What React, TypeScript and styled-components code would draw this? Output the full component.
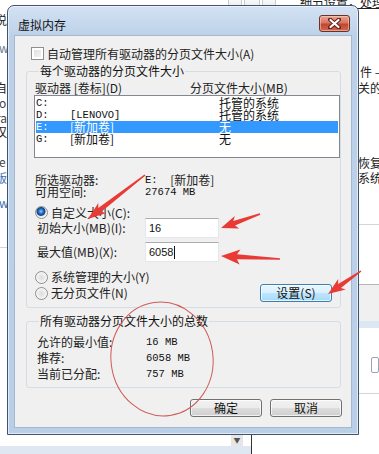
import React from 'react';
import styled, { createGlobalStyle } from 'styled-components';

const GlobalStyle = createGlobalStyle`
  html, body { margin: 0; padding: 0; background: #fff; }
  body { font-family: "Noto Sans CJK SC", "Liberation Sans", sans-serif; }
`;

const CJK = `"Noto Sans CJK SC", "Liberation Sans", sans-serif`;
const MONO = `"Liberation Mono", "Noto Sans CJK SC", monospace`;

/* ---------- page behind the dialog ---------- */

const Page = styled.div`
  position: relative;
  width: 379px;
  height: 454px;
  overflow: hidden;
  background: #fff;
  font-family: ${CJK};
  font-size: 12px;
  color: #222;
`;

const TopStrip = styled.div`
  display: flex;
  align-items: flex-start;
  height: 12px;
`;

const ToolIcons = styled.div`
  display: flex;
  gap: 2px;
  margin-left: 228px;
  margin-top: -2px;
`;

const ToolIcon = styled.div<{ $w: number }>`
  width: ${(p) => p.$w}px;
  height: 12px;
  border: 1px solid #c8ccd2;
  background: linear-gradient(#fafafa, #e4e6ea);
`;

const TopText = styled.div`
  margin-left: 24px;
  margin-top: -4px;
  line-height: 12px;
  white-space: nowrap;
  text-decoration: underline;
`;

const Body = styled.div`
  display: flex;
  height: 423px;
`;

const SideStrip = styled.div<{ $w: number }>`
  width: ${(p) => p.$w}px;
  display: flex;
  flex-direction: column;
  overflow: hidden;
`;

const Center = styled.div`
  flex: 1;
`;

const SideLine = styled.div<{ $gap: number; $color?: string; $shift?: number }>`
  margin-top: ${(p) => p.$gap}px;
  margin-left: ${(p) => p.$shift ?? 0}px;
  line-height: 12px;
  height: 12px;
  white-space: nowrap;
  color: ${(p) => p.$color ?? '#222'};
`;

const Rule = styled.div<{ $gap: number; $color?: string }>`
  margin-top: ${(p) => p.$gap}px;
  height: 1px;
  background: ${(p) => p.$color ?? '#d4d4d4'};
`;

const GreyBand = styled.div`
  height: 36px;
  background: #f0f0f0;
  border-top: 1px solid #b5b5b5;
  border-bottom: 7px solid #dce7f3;
`;

const SmallBox = styled.div`
  margin-top: 29px;
  margin-left: 14px;
  width: 6px;
  height: 14px;
  border: 1px solid #9aa4b0;
  border-radius: 2px;
`;

const BottomBar = styled.div`
  display: flex;
  height: 19px;
`;

const BottomLeft = styled.div`
  width: 251px;
  border-right: 1px solid #333;
  display: flex;
  flex-direction: column;
`;

const BottomWhite = styled.div`
  height: 11px;
  display: flex;
  justify-content: flex-end;
  padding-right: 8px;
`;

const ScrollArrow = styled.div`
  width: 12px;
  height: 11px;
  background: #e6e6e6;
  display: flex;
  justify-content: center;
  align-items: center;
  color: #555;
  font-size: 7px;
  line-height: 7px;
`;

const BottomBlue = styled.div`
  flex: 1;
  background: #dfe8f2;
`;

/* ---------- dialog ---------- */

const Window = styled.div`
  position: absolute;
  left: 7px;
  top: 5px;
  width: 350px;
  height: 428px;
  border: 1px solid #40546e;
  border-radius: 7px 7px 0 0;
  background: linear-gradient(#d3e2f3 0, #bcd1e9 30px, #b9cfe8 100%);
  display: flex;
  flex-direction: column;
  box-shadow: inset 0 0 0 1px rgba(255, 255, 255, 0.6);
`;

const TitleBar = styled.div`
  height: 29px;
  display: flex;
  align-items: flex-start;
  justify-content: space-between;
  padding: 9px 8px 0 10px;
  box-sizing: border-box;
`;

const TitleText = styled.div`
  margin-top: 4px;
  font-size: 12px;
  line-height: 12px;
  color: #111;
`;

const CloseButton = styled.div`
  width: 31px;
  height: 17px;
  box-sizing: border-box;
  border: 1px solid #6e2f27;
  border-radius: 3px;
  background: linear-gradient(#e8a594 0%, #d7765f 45%, #c24630 55%, #d0674c 100%);
  display: flex;
  align-items: center;
  justify-content: center;
  box-shadow: inset 0 0 0 1px rgba(255, 220, 210, 0.5);
`;

const Client = styled.div`
  margin: 0 6px;
  height: 393px;
  box-sizing: border-box;
  background: #f0f0f0;
  border: 1px solid #a7b8cd;
  display: flex;
  flex-direction: column;
`;

const CheckRow = styled.label`
  display: flex;
  align-items: center;
  gap: 3px;
  margin: 11px 0 0 16px;
  height: 13px;
  line-height: 12px;
`;

const CheckBox = styled.span`
  width: 13px;
  height: 13px;
  box-sizing: border-box;
  border: 1px solid #8f8f8f;
  background: linear-gradient(135deg, #dcdcdc, #f6f6f6);
  box-shadow: inset 0 0 0 2px #fff;
`;

const Group = styled.fieldset<{ $gap: number; $padBottom: number }>`
  margin: ${(p) => p.$gap}px 0 0 11px;
  width: 315px;
  box-sizing: border-box;
  padding: 0 8px ${(p) => p.$padBottom}px 7px;
  border: 1px solid #d5dde4;
  border-radius: 3px;
  min-width: 0;
`;

const Legend = styled.legend`
  margin-left: 5px;
  padding: 0 1px;
  font-size: 12px;
  line-height: 12px;
  color: #111;
`;

const HeaderRow = styled.div`
  display: flex;
  margin: 5px 0 1px 1px;
  line-height: 12px;
  height: 12px;
`;

const HeaderCell = styled.span<{ $w?: number }>`
  width: ${(p) => (p.$w ? `${p.$w}px` : 'auto')};
  white-space: nowrap;
`;

const ListBox = styled.div`
  width: 306px;
  height: 63px;
  box-sizing: border-box;
  border: 1px solid #828790;
  background: #fff;
  padding: 1px 1px 0 1px;
`;

const ListRow = styled.div<{ $selected?: boolean }>`
  display: flex;
  height: 12px;
  line-height: 12px;
  background: ${(p) => (p.$selected ? '#3399ff' : 'transparent')};
  color: ${(p) => (p.$selected ? '#fff' : '#111')};
`;

const Cell = styled.span<{ $w?: number; $mono?: boolean }>`
  width: ${(p) => (p.$w ? `${p.$w}px` : 'auto')};
  flex-shrink: 0;
  white-space: nowrap;
  font-family: ${(p) => (p.$mono ? MONO : CJK)};
  font-size: ${(p) => (p.$mono ? '10.5px' : '12px')};
`;

const InfoBlock = styled.div`
  margin: 16px 0 0 1px;
  display: flex;
  flex-direction: column;
`;

const InfoRow = styled.div<{ $h?: number }>`
  display: flex;
  align-items: center;
  height: ${(p) => p.$h ?? 12}px;
  line-height: 12px;
`;

const InfoLabel = styled.span<{ $w: number }>`
  width: ${(p) => p.$w}px;
  white-space: nowrap;
  flex-shrink: 0;
`;

const Mono = styled.span`
  font-family: ${MONO};
  font-size: 10.5px;
  white-space: nowrap;
  color: #111;
`;

const RadioRow = styled.label<{ $gap: number; $h: number }>`
  display: flex;
  align-items: center;
  gap: 3px;
  margin: ${(p) => p.$gap}px 0 0 1px;
  height: ${(p) => p.$h}px;
  line-height: 12px;
  white-space: nowrap;
`;

const Radio = styled.span<{ $on?: boolean }>`
  width: 13px;
  height: 13px;
  flex-shrink: 0;
  box-sizing: border-box;
  border-radius: 50%;
  border: 1px solid #8f8f8f;
  background: ${(p) =>
    p.$on
      ? 'radial-gradient(circle at 45% 40%, #8fd0ff 0, #2b7fd0 2px, #123f86 4px, #e8e8e8 5px, #f7f7f7 6px)'
      : 'radial-gradient(circle, #dcdcdc 0, #f4f4f4 5px)'};
`;

const FieldRow = styled.div<{ $gap: number }>`
  display: flex;
  align-items: center;
  margin: ${(p) => p.$gap}px 0 0 3px;
  height: 20px;
`;

const FieldLabel = styled.span`
  width: 108px;
  white-space: nowrap;
  line-height: 12px;
`;

const Input = styled.div`
  width: 74px;
  height: 20px;
  box-sizing: border-box;
  border: 1px solid #e2e7ed;
  border-top-color: #abadb3;
  background: #fff;
  padding: 0 3px;
  display: flex;
  align-items: center;
  font-family: "Liberation Sans", sans-serif;
  font-size: 11px;
  color: #111;
`;

const Caret = styled.span`
  width: 1px;
  height: 13px;
  background: #111;
  margin-left: 1px;
`;

const LastRow = styled.div`
  display: flex;
  justify-content: space-between;
  align-items: center;
  margin-top: 1px;
  height: 18px;
`;

const Button = styled.button<{ $focus?: boolean }>`
  width: 72px;
  height: 18px;
  padding: 0;
  box-sizing: border-box;
  border-radius: 3px;
  font-family: ${CJK};
  font-size: 12px;
  line-height: 12px;
  color: #111;
  border: 1px solid ${(p) => (p.$focus ? '#3c7fb1' : '#707070')};
  background: ${(p) =>
    p.$focus
      ? 'linear-gradient(#eaf6fd 0%, #d9f0fc 50%, #bee6fd 51%, #a7d9f5 100%)'
      : 'linear-gradient(#f2f2f2 0%, #ebebeb 50%, #dddddd 51%, #cfcfcf 100%)'};
  box-shadow: inset 0 0 0 1px rgba(255, 255, 255, 0.7);
`;

const TotalRow = styled.div<{ $first?: boolean }>`
  display: flex;
  align-items: center;
  height: 16px;
  margin: ${(p) => (p.$first ? '7px' : '0')} 0 0 3px;
  line-height: 12px;
`;

const Footer = styled.div`
  display: flex;
  justify-content: flex-end;
  gap: 8px;
  margin: 11px 9px 0 0;
`;

/* ---------- annotations ---------- */

const Marks = styled.svg`
  position: absolute;
  left: 0;
  top: 0;
  pointer-events: none;
`;

type Pt = [number, number];

function arrowPoints(tail: Pt, tip: Pt, headLen = 14, headW = 13, tailW = 1.5, neckW = 5) {
  const dx = tip[0] - tail[0];
  const dy = tip[1] - tail[1];
  const len = Math.hypot(dx, dy);
  const ux = dx / len;
  const uy = dy / len;
  const nx = -uy;
  const ny = ux;
  const bx = tip[0] - ux * headLen;
  const by = tip[1] - uy * headLen;
  const bx2 = tip[0] - ux * (headLen + 3);
  const by2 = tip[1] - uy * (headLen + 3);
  const pts: Pt[] = [
    [tail[0] + (nx * tailW) / 2, tail[1] + (ny * tailW) / 2],
    [bx + (nx * neckW) / 2, by + (ny * neckW) / 2],
    [bx2 + (nx * headW) / 2, by2 + (ny * headW) / 2],
    tip,
    [bx2 - (nx * headW) / 2, by2 - (ny * headW) / 2],
    [bx - (nx * neckW) / 2, by - (ny * neckW) / 2],
    [tail[0] - (nx * tailW) / 2, tail[1] - (ny * tailW) / 2],
  ];
  return pts.map((p) => `${p[0].toFixed(1)},${p[1].toFixed(1)}`).join(' ');
}

const arrows: { tail: Pt; tip: Pt; head?: number; w?: number }[] = [
  { tail: [145, 175], tip: [88, 219], head: 15, w: 13 },
  { tail: [260, 214], tip: [221, 228], head: 14, w: 13 },
  { tail: [280, 259], tip: [221, 256], head: 16, w: 15 },
  { tail: [361, 271], tip: [328, 294], head: 14, w: 13 },
];

const drives = [
  { letter: 'C:', label: '', size: '托管的系统' },
  { letter: 'D:', label: '[LENOVO]', size: '托管的系统', mono: true },
  { letter: 'E:', label: '[新加卷]', size: '无', selected: true },
  { letter: 'G:', label: '[新加卷]', size: '无' },
];

const leftLines = [
  { t: '说', gap: 2, shift: -5 },
  { t: 'w', gap: 16, c: '#6a7c90', shift: -1 },
  { t: '自', gap: 28, shift: -5 },
  { t: 'o', gap: 3, c: '#444', shift: -1 },
  { t: 'ra', gap: 3, c: '#444', shift: -4 },
  { t: '汉', gap: 2, shift: -5 },
  { t: 'e', gap: 18, c: '#444', shift: -1 },
  { t: '版', gap: 4, c: '#3d6fb0', shift: -5 },
  { t: 'w', gap: 13, c: '#3d6fb0', shift: -1 },
];

export default function App() {
  return (
    <>
      <GlobalStyle />
      <Page>
        <TopStrip>
          <ToolIcons>
            <ToolIcon $w={12} />
            <ToolIcon $w={14} />
            <ToolIcon $w={12} />
          </ToolIcons>
          <TopText>细节设置，处理</TopText>
        </TopStrip>
        <Body>
          <SideStrip $w={14}>
            {leftLines.map((l, i) => (
              <SideLine key={i} $gap={l.gap} $color={l.c} $shift={l.shift}>
                {l.t}
              </SideLine>
            ))}
            <Rule $gap={38} />
          </SideStrip>
          <Center />
          <SideStrip $w={22}>
            <SideLine $gap={54} $shift={3}>件 —</SideLine>
            <SideLine $gap={4} $shift={1}>关的</SideLine>
            <SideLine $gap={63} $shift={1}>恢复</SideLine>
            <SideLine $gap={3} $shift={1}>系统</SideLine>
            <Rule $gap={40} />
            <Rule $gap={58} $color="transparent" />
            <GreyBand />
            <SmallBox />
            <Rule $gap={20} />
          </SideStrip>
        </Body>
        <BottomBar>
          <BottomLeft>
            <BottomWhite>
              <ScrollArrow>▼</ScrollArrow>
            </BottomWhite>
            <BottomBlue />
          </BottomLeft>
        </BottomBar>

        <Window>
          <TitleBar>
            <TitleText>虚拟内存</TitleText>
            <CloseButton>
              <svg width="13" height="11" viewBox="0 0 13 11">
                <path d="M2 1.5 L11 9.5 M11 1.5 L2 9.5" stroke="#5a1e16" strokeWidth="4" strokeLinecap="round" />
                <path d="M2.5 2 L10.5 9 M10.5 2 L2.5 9" stroke="#fff" strokeWidth="2.2" strokeLinecap="round" />
              </svg>
            </CloseButton>
          </TitleBar>
          <Client>
            <CheckRow>
              <CheckBox />
              自动管理所有驱动器的分页文件大小(A)
            </CheckRow>

            <Group $gap={5} $padBottom={5}>
              <Legend>每个驱动器的分页文件大小</Legend>
              <HeaderRow>
                <HeaderCell $w={155}>驱动器 [卷标](D)</HeaderCell>
                <HeaderCell>分页文件大小(MB)</HeaderCell>
              </HeaderRow>
              <ListBox>
                {drives.map((d) => (
                  <ListRow key={d.letter} $selected={d.selected}>
                    <Cell $w={34} $mono>{d.letter}</Cell>
                    <Cell $w={149} $mono={d.mono}>{d.label}</Cell>
                    <Cell>{d.size}</Cell>
                  </ListRow>
                ))}
              </ListBox>

              <InfoBlock>
                <InfoRow>
                  <InfoLabel $w={110}>所选驱动器:</InfoLabel>
                  <Mono>E:&nbsp;&nbsp;</Mono>[新加卷]
                </InfoRow>
                <InfoRow>
                  <InfoLabel $w={110}>可用空间:</InfoLabel>
                  <Mono>27674 MB</Mono>
                </InfoRow>
              </InfoBlock>

              <RadioRow $gap={9} $h={11}>
                <Radio $on />
                自定义大小(C):
              </RadioRow>
              <FieldRow $gap={0}>
                <FieldLabel>初始大小(MB)(I):</FieldLabel>
                <Input>16</Input>
              </FieldRow>
              <FieldRow $gap={4}>
                <FieldLabel>最大值(MB)(X):</FieldLabel>
                <Input>
                  6058
                  <Caret />
                </Input>
              </FieldRow>
              <RadioRow $gap={9} $h={12}>
                <Radio />
                系统管理的大小(Y)
              </RadioRow>
              <LastRow>
                <RadioRow $gap={0} $h={18}>
                  <Radio />
                  无分页文件(N)
                </RadioRow>
                <Button $focus>设置(S)</Button>
              </LastRow>
            </Group>

            <Group $gap={7} $padBottom={5}>
              <Legend>所有驱动器分页文件大小的总数</Legend>
              <TotalRow $first>
                <InfoLabel $w={109}>允许的最小值:</InfoLabel>
                <Mono>16 MB</Mono>
              </TotalRow>
              <TotalRow>
                <InfoLabel $w={109}>推荐:</InfoLabel>
                <Mono>6058 MB</Mono>
              </TotalRow>
              <TotalRow>
                <InfoLabel $w={109}>当前已分配:</InfoLabel>
                <Mono>757 MB</Mono>
              </TotalRow>
            </Group>

            <Footer>
              <Button>确定</Button>
              <Button>取消</Button>
            </Footer>
          </Client>
        </Window>

        <Marks width="379" height="454" viewBox="0 0 379 454">
          {arrows.map((a, i) => (
            <polygon key={i} points={arrowPoints(a.tail, a.tip, a.head, a.w)} fill="#e83b36" />
          ))}
          <ellipse
            cx="162"
            cy="359"
            rx="51"
            ry="57"
            fill="none"
            stroke="#cf5b57"
            strokeWidth="1"
            transform="rotate(-8 162 359)"
          />
        </Marks>
      </Page>
    </>
  );
}
